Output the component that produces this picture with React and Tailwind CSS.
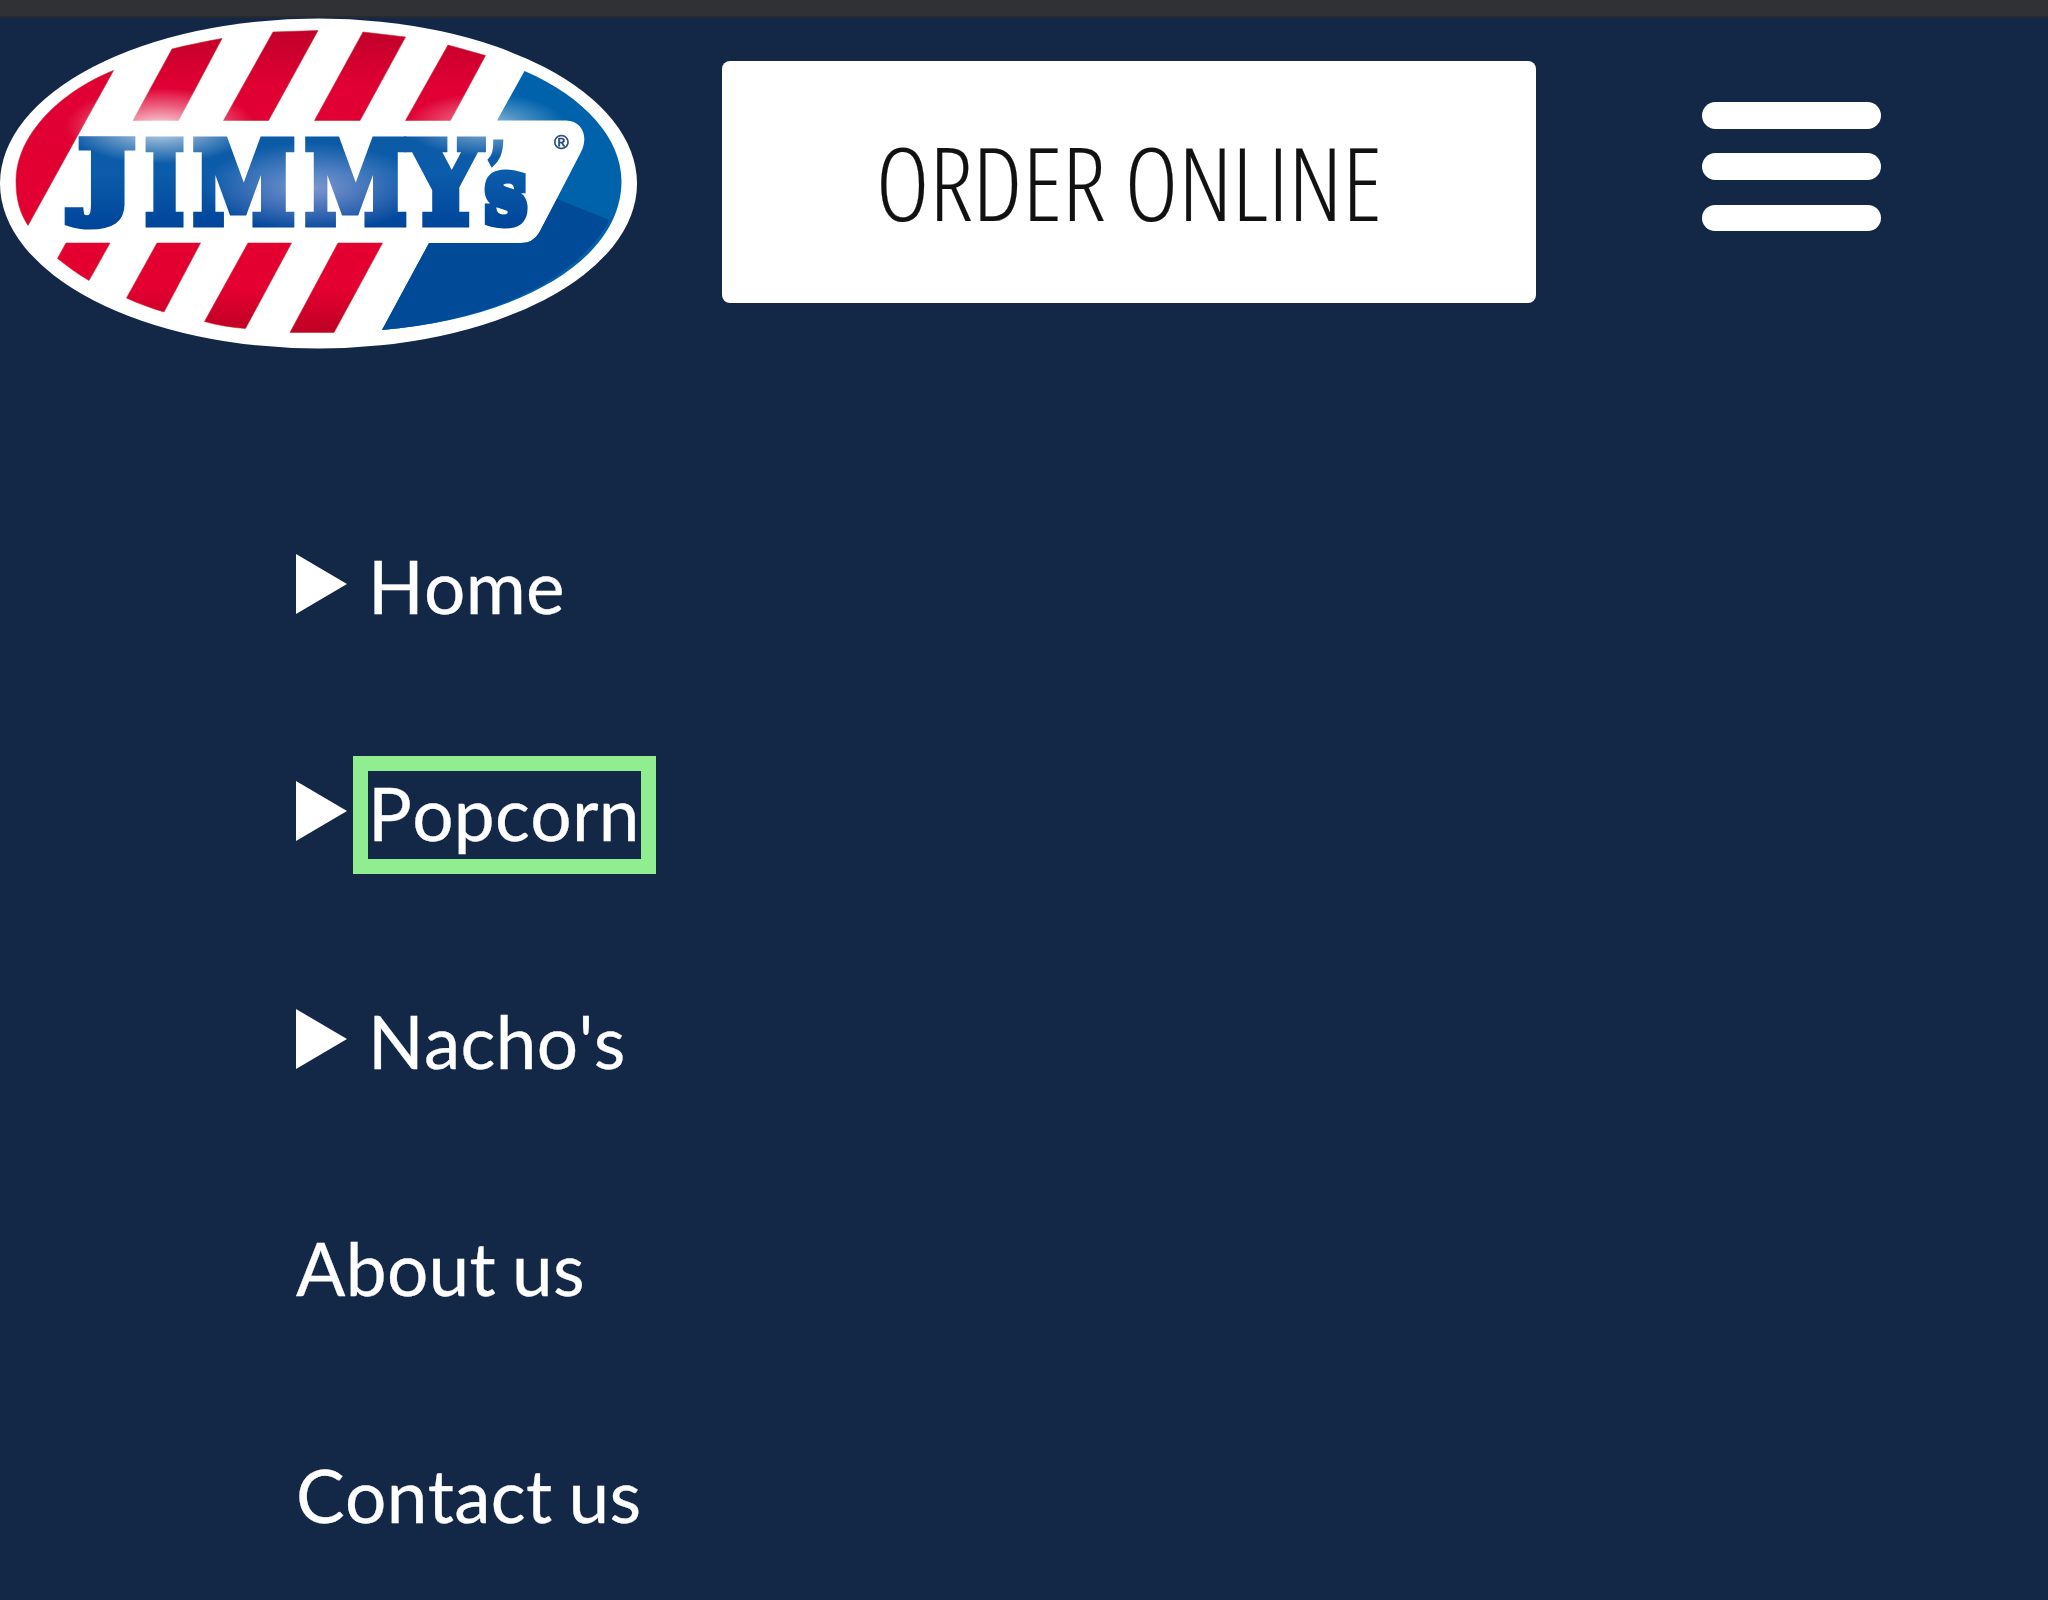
const RED_STRIPES = [
  'M113.5 70.5 C60 92 16 135 16 181 C16 200 20 213 28 225.5 Z',
  'M172 49 C188 45 205 41.500 222 38.500 L178.500 120.500 H133 Z',
  'M273 32 L318 30.500 L268.500 120.500 H223.500 Z',
  'M363 32 L405.500 37 L360 120.500 H314.500 Z',
  'M448 45 L485.500 55.500 L450.500 120.500 H405.500 Z',
  'M66 243 H110 L89 280.500 C77 273.500 67 266 57.500 258.500 Z',
  'M157 243 H200.500 L164 312 C151 308 138 303.500 126.500 298 Z',
  'M248 243 H291.500 L245.500 328.500 C231 327.500 217 325 204.500 321.500 Z',
  'M338 243 H382.500 L334 332.500 H290 Z',
];

const LETTERS = [
  { ch: 'J', x: 79, y: 206, w: 55, size: 90, stroke: 9 },
  { ch: 'I', x: 145, y: 222.5, w: 39, size: 113, stroke: 9 },
  { ch: 'M', x: 193, y: 222.5, w: 102, size: 113, stroke: 9 },
  { ch: 'M', x: 305, y: 222.5, w: 102, size: 113, stroke: 9 },
  { ch: 'Y', x: 409, y: 222.5, w: 72, size: 113, stroke: 9 },
  { ch: '’', x: 486, y: 204, w: 21, size: 86, stroke: 3 },
  { ch: 's', x: 485, y: 222.5, w: 42, size: 91, stroke: 9 },
];

function Logo() {
  return (
    <svg viewBox="0 0 640 332" className="h-[332px] w-[640px] shrink-0" role="img" aria-label="Jimmy's">
      <defs>
        <linearGradient id="red" gradientUnits="userSpaceOnUse" x1="0" y1="30" x2="0" y2="334">
          <stop offset="0" stopColor="#c00028" />
          <stop offset="0.18" stopColor="#e00034" />
          <stop offset="0.85" stopColor="#e40030" />
          <stop offset="1" stopColor="#bc0024" />
        </linearGradient>
        <linearGradient id="letters" gradientUnits="userSpaceOnUse" x1="0" y1="136" x2="0" y2="228">
          <stop offset="0" stopColor="#0b5aa5" />
          <stop offset="0.4" stopColor="#0b5cab" />
          <stop offset="1" stopColor="#00459a" />
        </linearGradient>
        <radialGradient id="shineA">
          <stop offset="0" stopColor="#fff" stopOpacity="0.85" />
          <stop offset="0.5" stopColor="#fff" stopOpacity="0.4" />
          <stop offset="1" stopColor="#fff" stopOpacity="0" />
        </radialGradient>
        <radialGradient id="shineB">
          <stop offset="0" stopColor="#7a6076" />
          <stop offset="1" stopColor="#000" />
        </radialGradient>
      </defs>
      <g transform="translate(0 -17)">
        <ellipse cx="318.500" cy="183.500" rx="318.500" ry="165" fill="#fff" />
        {RED_STRIPES.map((d) => (
          <path key={d} d={d} fill="url(#red)" stroke="#c4282c" strokeOpacity="0.6" strokeWidth="1" />
        ))}
        <path
          d="M524.500 71 C585 97 621.500 139 621.500 181 C621.500 262 515 319 382 330 L429 243 H521 Q533 243 539 233 L581 152 C589 136 582 121 566 120.500 H497 Z"
          fill="#0062ab"
        />
        <path
          d="M557 199 L609.500 220 C575 285 480 322 382 330 L429 243 H521 Q533 243 539 233 Z"
          fill="#004a97"
        />
        <text
          fontFamily='"DejaVu Serif", serif'
          fontWeight="700"
          fill="url(#letters)"
          stroke="url(#letters)"
          strokeLinejoin="miter"
        >
          {LETTERS.map((l, i) => (
            <tspan
              key={i}
              x={l.x}
              y={l.y}
              fontSize={l.size}
              strokeWidth={l.stroke}
              textLength={l.w}
              lengthAdjust="spacingAndGlyphs"
            >
              {l.ch}
            </tspan>
          ))}
        </text>
        <ellipse cx="160" cy="126" rx="95" ry="38" fill="url(#shineA)" />
        <ellipse cx="485" cy="125" rx="80" ry="32" fill="url(#shineA)" opacity="0.7" />
        <ellipse cx="312" cy="188" rx="110" ry="45" fill="url(#shineB)" className="mix-blend-screen" />
      </g>
      <text
        x="554"
        y="132"
        fontFamily='"Liberation Sans", sans-serif'
        fontSize="20"
        fill="#27467c"
        stroke="#27467c"
        strokeWidth="0.600"
      >
        ®
      </text>
    </svg>
  );
}

function MenuButton() {
  return (
    <button aria-label="Menu" className="ml-[166px] mt-[85.400px] flex w-[179.400px] flex-col gap-[24.700px]">
      <span className="h-[26.400px] rounded-full bg-white" />
      <span className="h-[26.400px] rounded-full bg-white" />
      <span className="h-[26.400px] rounded-full bg-white" />
    </button>
  );
}

const ITEMS = [
  { label: 'Home', arrow: true },
  { label: 'Popcorn', arrow: true, focused: true },
  { label: "Nacho's", arrow: true },
  { label: 'About us' },
  { label: 'Contact us' },
];

export default function App() {
  return (
    <div className="flex h-[1600px] w-[2048px] flex-col overflow-hidden bg-[#132747]">
      <div className="h-[18px] shrink-0 border-b-2 border-[#26292f] bg-[#303134]" />
      <header className="-mt-px flex h-[332px] shrink-0 items-start">
        <Logo />
        <a className="ml-[82px] mt-[44px] flex h-[242px] w-[814px] items-center justify-center rounded-lg bg-white pt-[2px]">
          <span className="whitespace-nowrap font-['Open_Sans'] text-[101.500px] leading-none font-light tracking-[0.200px] text-[#111] [-webkit-text-stroke:0.2px_#111] [font-stretch:75%]">
            ORDER ONLINE
          </span>
        </a>
        <MenuButton />
      </header>
      <ul className="mt-[195px] ml-[296px] flex flex-col gap-[140px] font-['Lato'] text-[73px] leading-[84.300px] tracking-[0.300px] text-white [-webkit-text-stroke:0.3px_white] [font-kerning:none] [word-spacing:-3px]">
        {ITEMS.map((item) => (
          <li key={item.label} className="flex h-[87.300px] items-center">
            {item.arrow && (
              <svg viewBox="0 0 51 60" className="mr-[21px] mb-[7px] h-[60px] w-[51px]" fill="#fff">
                <path d="M0 0 51 30 0 60Z" />
              </svg>
            )}
            <a className={item.focused ? 'pb-[3px] pr-px outline-[15px] outline-solid outline-[#90ee90]' : 'pb-[3px]'}>
              {item.label}
            </a>
          </li>
        ))}
      </ul>
    </div>
  );
}
